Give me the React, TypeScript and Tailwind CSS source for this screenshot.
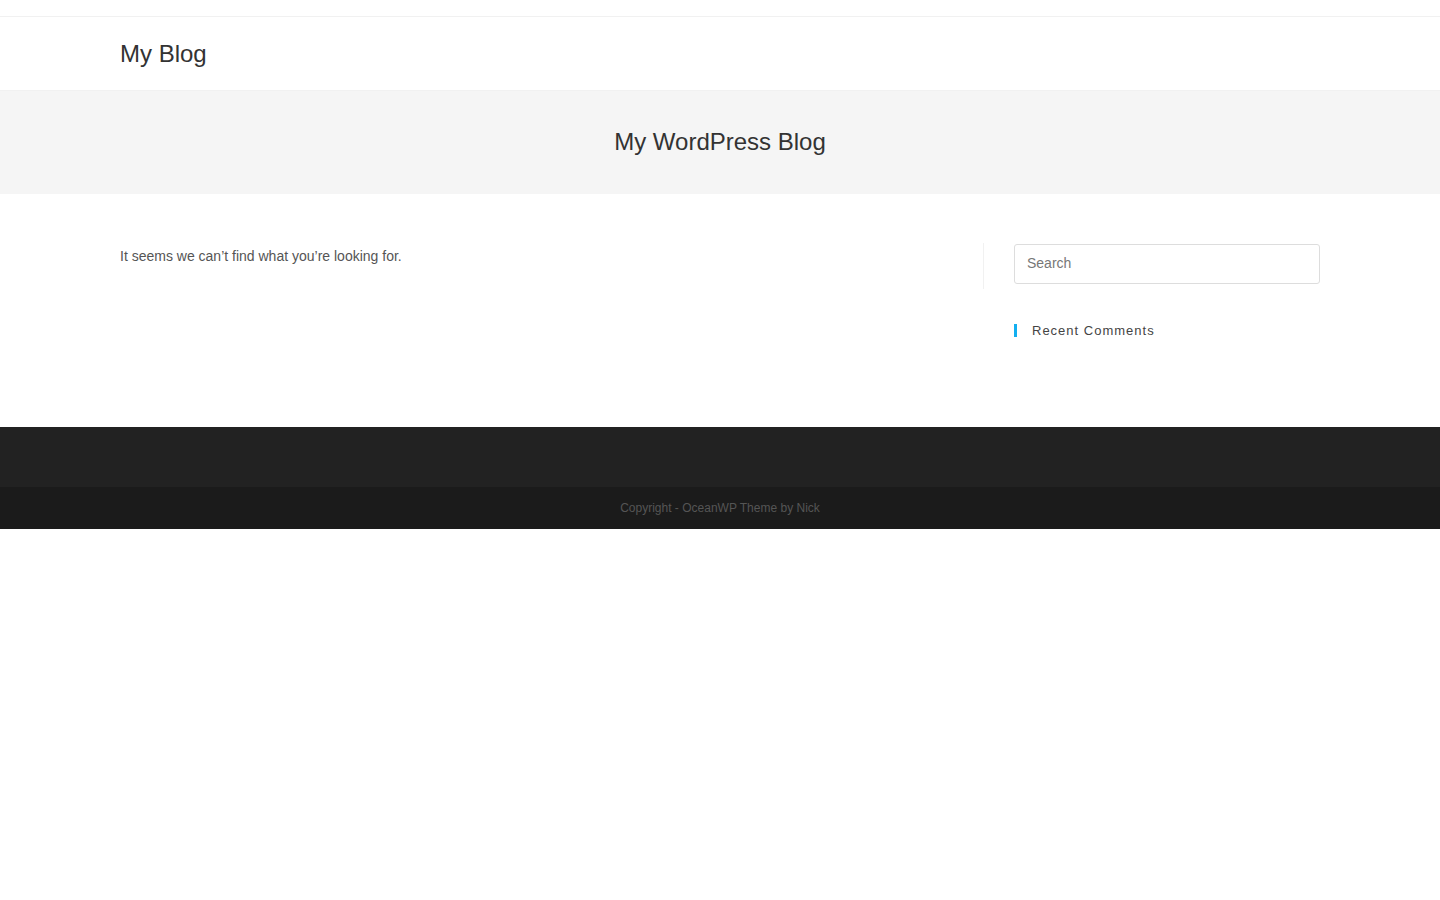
export default function App() {
  return (
    <div className="min-h-[900px] bg-white font-['Liberation_Sans',Arial,sans-serif] text-[#333]">
      {/* top bar */}
      <div className="h-[17px] border-b border-[#f1f1f1]" />

      {/* header */}
      <header className="border-b border-[#f1f1f1]">
        <div className="mx-auto flex h-[73px] w-[1200px] items-center">
          <a className="text-[24px] leading-none text-[#333]">My Blog</a>
        </div>
      </header>

      {/* page header */}
      <div className="bg-[#f5f5f5] pt-[34px] pb-[35px]">
        <h1 className="text-center text-[24px] leading-[1.4] text-[#333]">My WordPress Blog</h1>
      </div>

      {/* content */}
      <main className="mx-auto flex w-[1200px] pt-[49px] pb-[50px]">
        <div className="w-[863px] pt-px pr-[30px]">
          <p className="text-[14px] leading-[1.8] text-[#555]">It seems we can’t find what you’re looking for.</p>
        </div>
        <aside className="flex-1">
          <div className="border-l border-[#f1f1f1] pt-px pb-[5px] pl-[30px]">
            <input
              type="search"
              placeholder="Search"
              className="block h-[40px] w-full rounded-[3px] border border-[#ddd] px-[12px] pb-[2px] text-[14px] text-[#333] outline-none placeholder:text-[#777]"
            />
          </div>
          <div className="pl-[31px] pt-[35px] pb-[40px]">
            <h4 className="border-l-[3px] border-[#13aff0] pl-[15px] text-[13px] leading-none tracking-[1px] text-[#444]">
              Recent Comments
            </h4>
          </div>
        </aside>
      </main>

      {/* footer */}
      <footer>
        <div className="h-[60px] bg-[#222]" />
        <div className="flex h-[42px] items-center justify-center bg-[#1b1b1b]">
          <span className="text-[12px] text-[#555]">Copyright - OceanWP Theme by Nick</span>
        </div>
      </footer>
    </div>
  );
}
